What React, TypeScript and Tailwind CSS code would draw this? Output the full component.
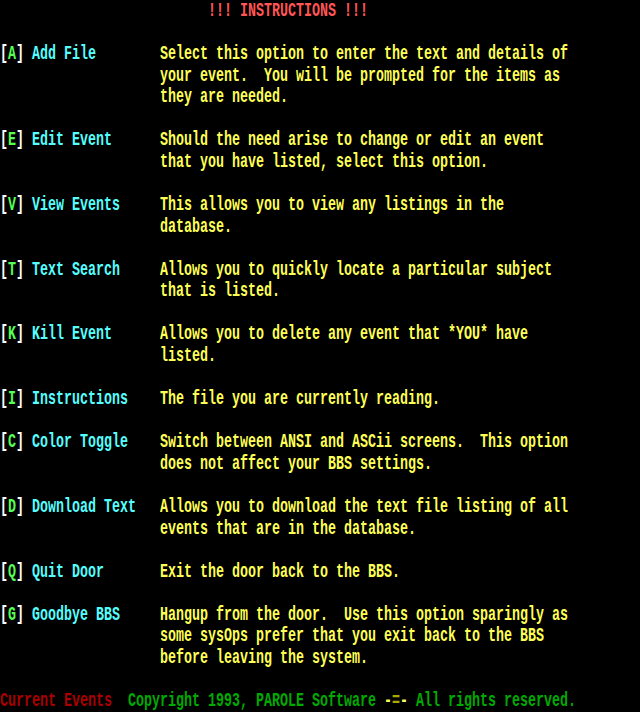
import React from 'react';

type Option = {
    key: string;
    label: string;
    lines: string[];
};

const options: Option[] = [
    {
        key: 'A',
        label: 'Add File',
        lines: [
            'Select this option to enter the text and details of',
            'your event.  You will be prompted for the items as',
            'they are needed.'
        ]
    },
    {
        key: 'E',
        label: 'Edit Event',
        lines: ['Should the need arise to change or edit an event', 'that you have listed, select this option.']
    },
    {
        key: 'V',
        label: 'View Events',
        lines: ['This allows you to view any listings in the', 'database.']
    },
    {
        key: 'T',
        label: 'Text Search',
        lines: ['Allows you to quickly locate a particular subject', 'that is listed.']
    },
    {
        key: 'K',
        label: 'Kill Event',
        lines: ['Allows you to delete any event that *YOU* have', 'listed.']
    },
    {
        key: 'I',
        label: 'Instructions',
        lines: ['The file you are currently reading.']
    },
    {
        key: 'C',
        label: 'Color Toggle',
        lines: ['Switch between ANSI and ASCii screens.  This option', 'does not affect your BBS settings.']
    },
    {
        key: 'D',
        label: 'Download Text',
        lines: ['Allows you to download the text file listing of all', 'events that are in the database.']
    },
    {
        key: 'Q',
        label: 'Quit Door',
        lines: ['Exit the door back to the BBS.']
    },
    {
        key: 'G',
        label: 'Goodbye BBS',
        lines: [
            'Hangup from the door.  Use this option sparingly as',
            'some sysOps prefer that you exit back to the BBS',
            'before leaving the system.'
        ]
    }
];

// one text row of the 80x33 screen
const Row: React.FC<{ children?: React.ReactNode; className?: string }> = ({ children, className = '' }) => (
    <div className={`h-[21.576px] leading-[21.576px] whitespace-pre ${className}`}>
        <span className="inline-block scale-y-[1.5]">{children}</span>
    </div>
);

export default function App() {
    return (
        <div
            className="w-[640px] h-[712px] bg-black overflow-hidden text-[13.333px] font-bold"
            style={{ fontFamily: '"Liberation Mono", "DejaVu Sans Mono", monospace' }}
        >
            <Row className="pl-[208px] text-[#ff5555]">!!! INSTRUCTIONS !!!</Row>
            <Row />

            {options.map(opt => (
                <div key={opt.key} className="flex">
                    <div className="w-[160px] shrink-0">
                        <Row>
                            <span className="text-white">[</span>
                            <span className="text-[#55ff55]">{opt.key}</span>
                            <span className="text-white">]</span>
                            <span className="text-[#55ffff]"> {opt.label}</span>
                        </Row>
                    </div>
                    <div className="flex-1 text-[#ffff55]">
                        {opt.lines.map((line, i) => (
                            <Row key={i}>{line}</Row>
                        ))}
                        <Row />
                    </div>
                </div>
            ))}

            <Row>
                <span className="text-[#aa0000]">Current Events</span>
                <span className="text-[#00aa00]">  Copyright 1993, PAROLE Software </span>
                <span className="text-[#ffff55]">-</span>
                <span className="text-[#aaaa00]">=</span>
                <span className="text-[#ffff55]">-</span>
                <span className="text-[#00aa00]"> All rights reserved.</span>
            </Row>
        </div>
    );
}
